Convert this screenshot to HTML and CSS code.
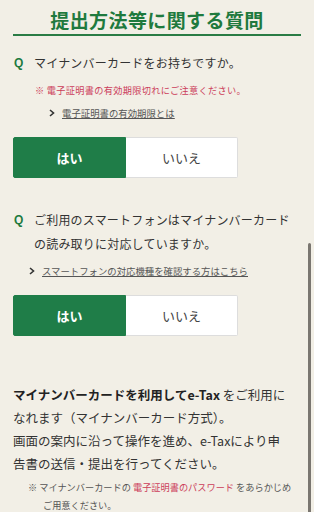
FILE: index.html
```html
<!DOCTYPE html>
<html lang="ja">
<head>
    <meta charset="UTF-8">
    <title>提出方法等に関する質問</title>
    <link rel="stylesheet" href="styles.css">
</head>
<body>
    <h2 class="title">提出方法等に関する質問</h2>

    <div class="question">
        <p class="q-line"><span class="q-mark">Q</span><span class="q-text">マイナンバーカードをお持ちですか。</span></p>
        <div class="note-block">
            <p class="warn">※ 電子証明書の有効期限切れにご注意ください。</p>
            <a class="more" href="#"><svg class="chev" width="6" height="8" viewBox="0 0 6 8"><polyline points="1,1 4.5,4 1,7" fill="none" stroke="#333" stroke-width="1.6"/></svg><span>電子証明書の有効期限とは</span></a>
        </div>
        <div class="choice">
            <button class="yes">はい</button>
            <button class="no">いいえ</button>
        </div>
    </div>

    <div class="question second">
        <p class="q-line"><span class="q-mark">Q</span><span class="q-text">ご利用のスマートフォンはマイナンバーカードの読み取りに対応していますか。</span></p>
        <a class="more more-wide" href="#"><svg class="chev" width="6" height="8" viewBox="0 0 6 8"><polyline points="1,1 4.5,4 1,7" fill="none" stroke="#333" stroke-width="1.6"/></svg><span>スマートフォンの対応機種を確認する方はこちら</span></a>
        <div class="choice">
            <button class="yes">はい</button>
            <button class="no">いいえ</button>
        </div>
    </div>

    <div class="result">
        <p class="lead"><strong>マイナンバーカードを利用してe-Tax</strong> をご利用になれます（マイナンバーカード方式）。<br>画面の案内に沿って操作を進め、e-Taxにより申告書の送信・提出を行ってください。</p>
        <p class="small-note">※ マイナンバーカードの <span class="red">電子証明書のパスワード</span> をあらかじめご用意ください。</p>
    </div>

    <div class="scrollbar"></div>
</body>
</html>
```

FILE: styles.css
```css
body {
    margin: 0;
    background-color: #f2efe6;
    font-family: "Noto Sans CJK JP", "Noto Sans", sans-serif;
    color: #333;
}
p {
    margin: 0;
}
.title {
    margin: 0 13px;
    padding-top: 8px;
    padding-bottom: 2px;
    font-size: 19px;
    line-height: 24px;
    letter-spacing: 0.4px;
    text-align: center;
    color: #1f7a3e;
    border-bottom: 2px solid #2a7c45;
}
.question {
    padding: 15px 13px 0 14px;
}
.question.second {
    padding-top: 30px;
}
.q-line {
    display: flex;
    font-size: 12px;
    line-height: 24px;
    letter-spacing: 0.2px;
}
.q-mark {
    flex: 0 0 20px;
    font-family: "Liberation Sans", Arial, sans-serif;
    font-weight: bold;
    color: #1f7a3e;
}
.note-block {
    padding-left: 21px;
    margin-top: 6px;
}
.warn {
    font-size: 9.2px;
    line-height: 18px;
    color: #cc3d5a;
    letter-spacing: 0.3px;
}
.more {
    display: flex;
    align-items: center;
    gap: 7px;
    margin-top: 5px;
    padding-left: 14px;
    font-size: 9.4px;
    line-height: 18px;
    color: #555;
}
.more span {
    text-decoration: underline;
}
.more-wide {
    margin-top: 6px;
    padding-left: 15px;
}
.choice {
    display: flex;
    margin-top: 15px;
    width: 225px;
    margin-left: -1px;
}
.choice button {
    flex: 1;
    height: 41px;
    font-family: "Noto Sans CJK JP", sans-serif;
    font-size: 13px;
    border: 1px solid #ddd;
    cursor: pointer;
}
.yes {
    background-color: #1f7d48;
    border-color: #1f7d48 !important;
    color: white;
    font-weight: bold;
    border-radius: 2px 0 0 2px;
}
.no {
    background-color: white;
    color: #444;
    border-left: none !important;
    border-radius: 0 2px 2px 0;
}
.result {
    padding: 47px 27px 0 13px;
}
.lead {
    font-size: 12.5px;
    line-height: 23px;
    color: #333;
}
.lead strong {
    color: #222;
}
.small-note {
    margin-top: 3px;
    margin-right: -12px;
    padding-left: 30px;
    text-indent: -15px;
    font-size: 9.2px;
    line-height: 18px;
    color: #555;
}
.red {
    color: #cc3d5a;
}
.scrollbar {
    position: fixed;
    right: 3px;
    top: 243px;
    width: 3px;
    height: 280px;
    background-color: #7a7670;
    border-radius: 2px;
}
```
